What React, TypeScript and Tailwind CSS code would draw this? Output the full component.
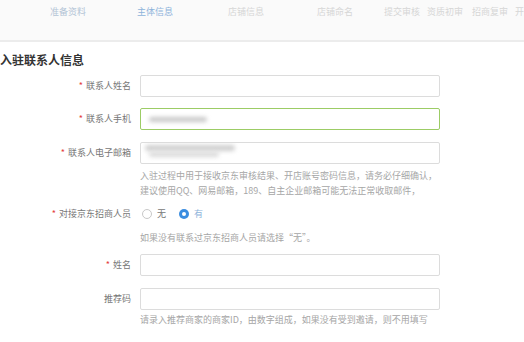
import React from 'react'

const font = { fontFamily: '"Noto Sans CJK SC", "Liberation Sans", sans-serif' }

function Label({ text, required }: { text: string; required?: boolean }) {
  return (
    <div className="w-[131px] shrink-0 text-right text-[9px] text-[#777]">
      {required && <span className="mr-[3px] text-[#e4393c]">*</span>}
      {text}
    </div>
  )
}

function Input({ active, children }: { active?: boolean; children?: React.ReactNode }) {
  return (
    <div
      className={`relative ml-[9px] h-[22px] w-[300px] shrink-0 overflow-hidden rounded-[2px] border bg-white ${
        active ? 'border-[#9ccc65]' : 'border-[#dcdcdc]'
      }`}
    >
      {children}
    </div>
  )
}

export default function App() {
  return (
    <div className="h-[342px] w-[524px] overflow-hidden bg-white" style={font}>
      {/* steps */}
      <div className="h-[42px] border-b-2 border-[#ececec] bg-[#fafafa]">
        <div className="flex whitespace-nowrap pl-[50px] pt-[6px] text-[9px] leading-[12px] text-[#d6d6d6]">
          <span className="w-[87px] shrink-0 text-[#b3c4d6]">准备资料</span>
          <span className="w-[91px] shrink-0 text-[#8db3da]">主体信息</span>
          <span className="w-[89px] shrink-0">店铺信息</span>
          <span className="w-[67px] shrink-0">店铺命名</span>
          <span className="w-[43px] shrink-0">提交审核</span>
          <span className="w-[45px] shrink-0">资质初审</span>
          <span className="w-[43px] shrink-0">招商复审</span>
          <span className="shrink-0">开店任务</span>
        </div>
      </div>

      <div className="mt-[10px] text-[12px] font-bold leading-[16px] text-[#333]">入驻联系人信息</div>

      <div className="mt-[7px] flex items-center">
        <Label text="联系人姓名" required />
        <Input />
      </div>

      <div className="mt-[11px] flex items-center">
        <Label text="联系人手机" required />
        <Input active>
          <div className="absolute left-[8px] top-[8px] h-[5px] w-[58px] rounded bg-[#c8c8c8] blur-[2px]" />
        </Input>
      </div>

      <div className="mt-[12px] flex items-center">
        <Label text="联系人电子邮箱" required />
        <Input>
          <div className="absolute left-[4px] top-[2px] h-[6px] w-[90px] rounded bg-[#cfcfcf] blur-[2px]" />
          <div className="absolute left-[8px] top-[9px] h-[5px] w-[70px] rounded bg-[#dadada] blur-[2px]" />
        </Input>
      </div>
      <div className="mt-[4px] whitespace-nowrap pl-[140px] text-[9px] leading-[15px] text-[#a6a6a6]">
        <div>入驻过程中用于接收京东审核结果、开店账号密码信息，请务必仔细确认，</div>
        <div>建议使用QQ、网易邮箱，189、自主企业邮箱可能无法正常收取邮件，</div>
      </div>

      <div className="mt-[8px] flex h-[16px] items-center">
        <Label text="对接京东招商人员" required />
        <div className="ml-[11px] flex items-center text-[9px] text-[#777]">
          <span className="h-[10px] w-[10px] rounded-full border border-[#c8c8c8] bg-white" />
          <span className="ml-[5px]">无</span>
          <span className="ml-[13px] flex h-[10px] w-[10px] items-center justify-center rounded-full bg-[#3b8de0]">
            <span className="h-[4px] w-[4px] rounded-full bg-white" />
          </span>
          <span className="ml-[5px] text-[#8db3da]">有</span>
        </div>
      </div>
      <div className="mt-[8px] pl-[140px] text-[9px] leading-[15px] text-[#a6a6a6]">如果没有联系过京东招商人员请选择“无”。</div>

      <div className="mt-[9px] flex items-center">
        <Label text="姓名" required />
        <Input />
      </div>

      <div className="mt-[12px] flex items-center">
        <Label text="推荐码" />
        <Input />
      </div>
      <div className="mt-[2px] whitespace-nowrap pl-[140px] text-[9px] leading-[15px] text-[#a6a6a6]">
        请录入推荐商家的商家ID，由数字组成，如果没有受到邀请，则不用填写
      </div>
    </div>
  )
}
